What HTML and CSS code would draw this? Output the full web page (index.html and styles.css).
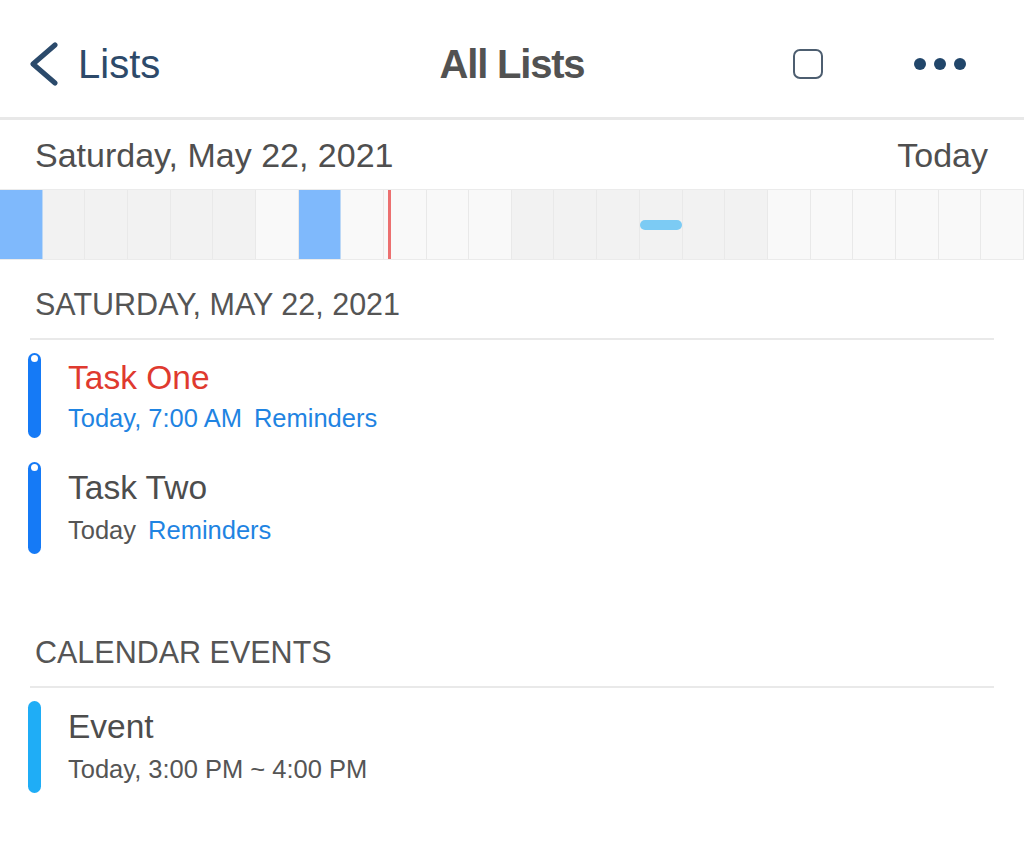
FILE: index.html
```html
<!DOCTYPE html>
<html lang="en">
<head>
<meta charset="utf-8">
<title>All Lists</title>
<link rel="stylesheet" href="styles.css">
</head>
<body>
<div class="app">
  <header class="nav">
    <div class="nav-back">
      <svg class="chevron" width="30" height="44" viewBox="0 0 30 44" aria-hidden="true">
        <polyline points="27,3 5,22 27,41" fill="none" stroke="#2b4a6b" stroke-width="5" stroke-linecap="round" stroke-linejoin="round"/>
      </svg>
      <span class="nav-back-label">Lists</span>
    </div>
    <div class="nav-title">All Lists</div>
    <div class="nav-actions">
      <span class="icon-square"></span>
      <span class="icon-more"><i></i><i></i><i></i></span>
    </div>
  </header>

  <div class="date-row">
    <span>Saturday, May 22, 2021</span>
    <span>Today</span>
  </div>

  <div class="timeline">
    <div class="cell cell--busy"></div>
    <div class="cell cell--dim"></div>
    <div class="cell cell--dim"></div>
    <div class="cell cell--dim"></div>
    <div class="cell cell--dim"></div>
    <div class="cell cell--dim"></div>
    <div class="cell"></div>
    <div class="cell cell--busy"></div>
    <div class="cell"></div>
    <div class="cell"></div>
    <div class="cell"></div>
    <div class="cell"></div>
    <div class="cell cell--dim"></div>
    <div class="cell cell--dim"></div>
    <div class="cell cell--dim"></div>
    <div class="cell cell--dim"><span class="pill"></span></div>
    <div class="cell cell--dim"></div>
    <div class="cell cell--dim"></div>
    <div class="cell"></div>
    <div class="cell"></div>
    <div class="cell"></div>
    <div class="cell"></div>
    <div class="cell"></div>
    <div class="cell"></div>
    <span class="now-line"></span>
  </div>

  <section class="section">
    <h2 class="section-head">SATURDAY, MAY 22, 2021</h2>
    <div class="list">
      <div class="row">
        <div class="bar"><span class="bar-dot"></span></div>
        <div class="row-text">
          <div class="row-title row-title--overdue">Task One</div>
          <div class="row-sub"><span class="sub-blue">Today, 7:00 AM</span><span class="sub-blue sub-list">Reminders</span></div>
        </div>
      </div>
      <div class="row row--tall">
        <div class="bar"><span class="bar-dot"></span></div>
        <div class="row-text">
          <div class="row-title">Task Two</div>
          <div class="row-sub"><span>Today</span><span class="sub-blue sub-list">Reminders</span></div>
        </div>
      </div>
    </div>
  </section>

  <section class="section section--events">
    <h2 class="section-head">CALENDAR EVENTS</h2>
    <div class="list">
      <div class="row row--tall">
        <div class="bar bar--event"></div>
        <div class="row-text">
          <div class="row-title">Event</div>
          <div class="row-sub"><span>Today, 3:00 PM ~ 4:00 PM</span></div>
        </div>
      </div>
    </div>
  </section>
</div>
</body>
</html>
```

FILE: styles.css
```css
* { box-sizing: border-box; }

html, body {
  margin: 0;
  padding: 0;
  background: #ffffff;
}

body {
  font-family: "Liberation Sans", Arial, sans-serif;
  color: #505050;
  width: 1024px;
  height: 852px;
  overflow: hidden;
}

/* Navigation bar */
.nav {
  height: 120px;
  padding-top: 10px;
  border-bottom: 3px solid #e8e8e8;
  display: grid;
  grid-template-columns: 1fr auto 1fr;
  align-items: center;
}

.nav-back {
  display: flex;
  align-items: center;
  gap: 20px;
  padding-left: 28px;
}

.chevron { display: block; }

.nav-back-label {
  font-size: 40px;
  line-height: 46px;
  color: #2d4a6a;
}

.nav-title {
  font-size: 40px;
  line-height: 46px;
  font-weight: 700;
  letter-spacing: -1.2px;
  color: #525252;
}

.nav-actions {
  display: flex;
  align-items: center;
  justify-content: flex-end;
  gap: 91px;
  padding-right: 58px;
}

.icon-square {
  width: 30px;
  height: 30px;
  border: 2px solid #4d5e70;
  border-radius: 7px;
}

.icon-more {
  display: flex;
  gap: 8px;
}

.icon-more i {
  width: 12px;
  height: 12px;
  border-radius: 50%;
  background: #21466a;
}

/* Date row */
.date-row {
  height: 69px;
  padding: 0 36px 0 35px;
  display: flex;
  align-items: center;
  justify-content: space-between;
  font-size: 34px;
  line-height: 38px;
  color: #4f4f4f;
}

/* Timeline strip */
.timeline {
  position: relative;
  height: 71px;
  border-top: 1px solid #ebebeb;
  border-bottom: 1px solid #ebebeb;
  display: grid;
  grid-template-columns: repeat(24, 1fr);
}

.cell {
  background: #f9f9f9;
  border-right: 1px solid #e9e9e9;
  display: flex;
  align-items: center;
}

.cell--dim { background: #f2f2f2; }

.cell--busy { background: #7fb9fc; border-right-color: #bcd8f6; }

.pill {
  width: 42px;
  height: 10px;
  border-radius: 5px;
  background: #7ccbf4;
}

.now-line {
  position: absolute;
  top: 0;
  bottom: 0;
  left: 388px;
  width: 3px;
  background: #ec7070;
}

/* Sections */
.section-head {
  margin: 0 30px;
  padding: 26px 0 16px 5px;
  border-bottom: 2px solid #e9e9e9;
  font-size: 30.5px;
  line-height: 36px;
  font-weight: 400;
  color: #555555;
}

.section--events { margin-top: 54px; }

.list {
  padding-top: 13px;
  display: flex;
  flex-direction: column;
  gap: 24px;
}

.row {
  display: flex;
  gap: 27px;
  padding-left: 28px;
}

.bar {
  width: 13px;
  border-radius: 7px;
  background: #157af6;
  display: flex;
  flex-direction: column;
  align-items: center;
  padding-top: 2px;
}

.bar--event { background: #1fadf6; }

.bar-dot {
  width: 7px;
  height: 7px;
  border-radius: 50%;
  background: #ffffff;
}

.row-text {
  display: flex;
  flex-direction: column;
  gap: 6px;
  padding: 6px 0 5px;
}

.row--tall .row-text {
  gap: 8px;
  padding: 7px 0 9px;
}

.row-title {
  font-size: 33.5px;
  line-height: 38px;
  color: #4d4d4d;
}

.row-title--overdue { color: #df3a2f; }

.row-sub {
  display: flex;
  font-size: 25.5px;
  line-height: 30px;
  color: #555555;
}

.sub-blue { color: #1f84e2; }

.sub-list { margin-left: 12px; }
```
